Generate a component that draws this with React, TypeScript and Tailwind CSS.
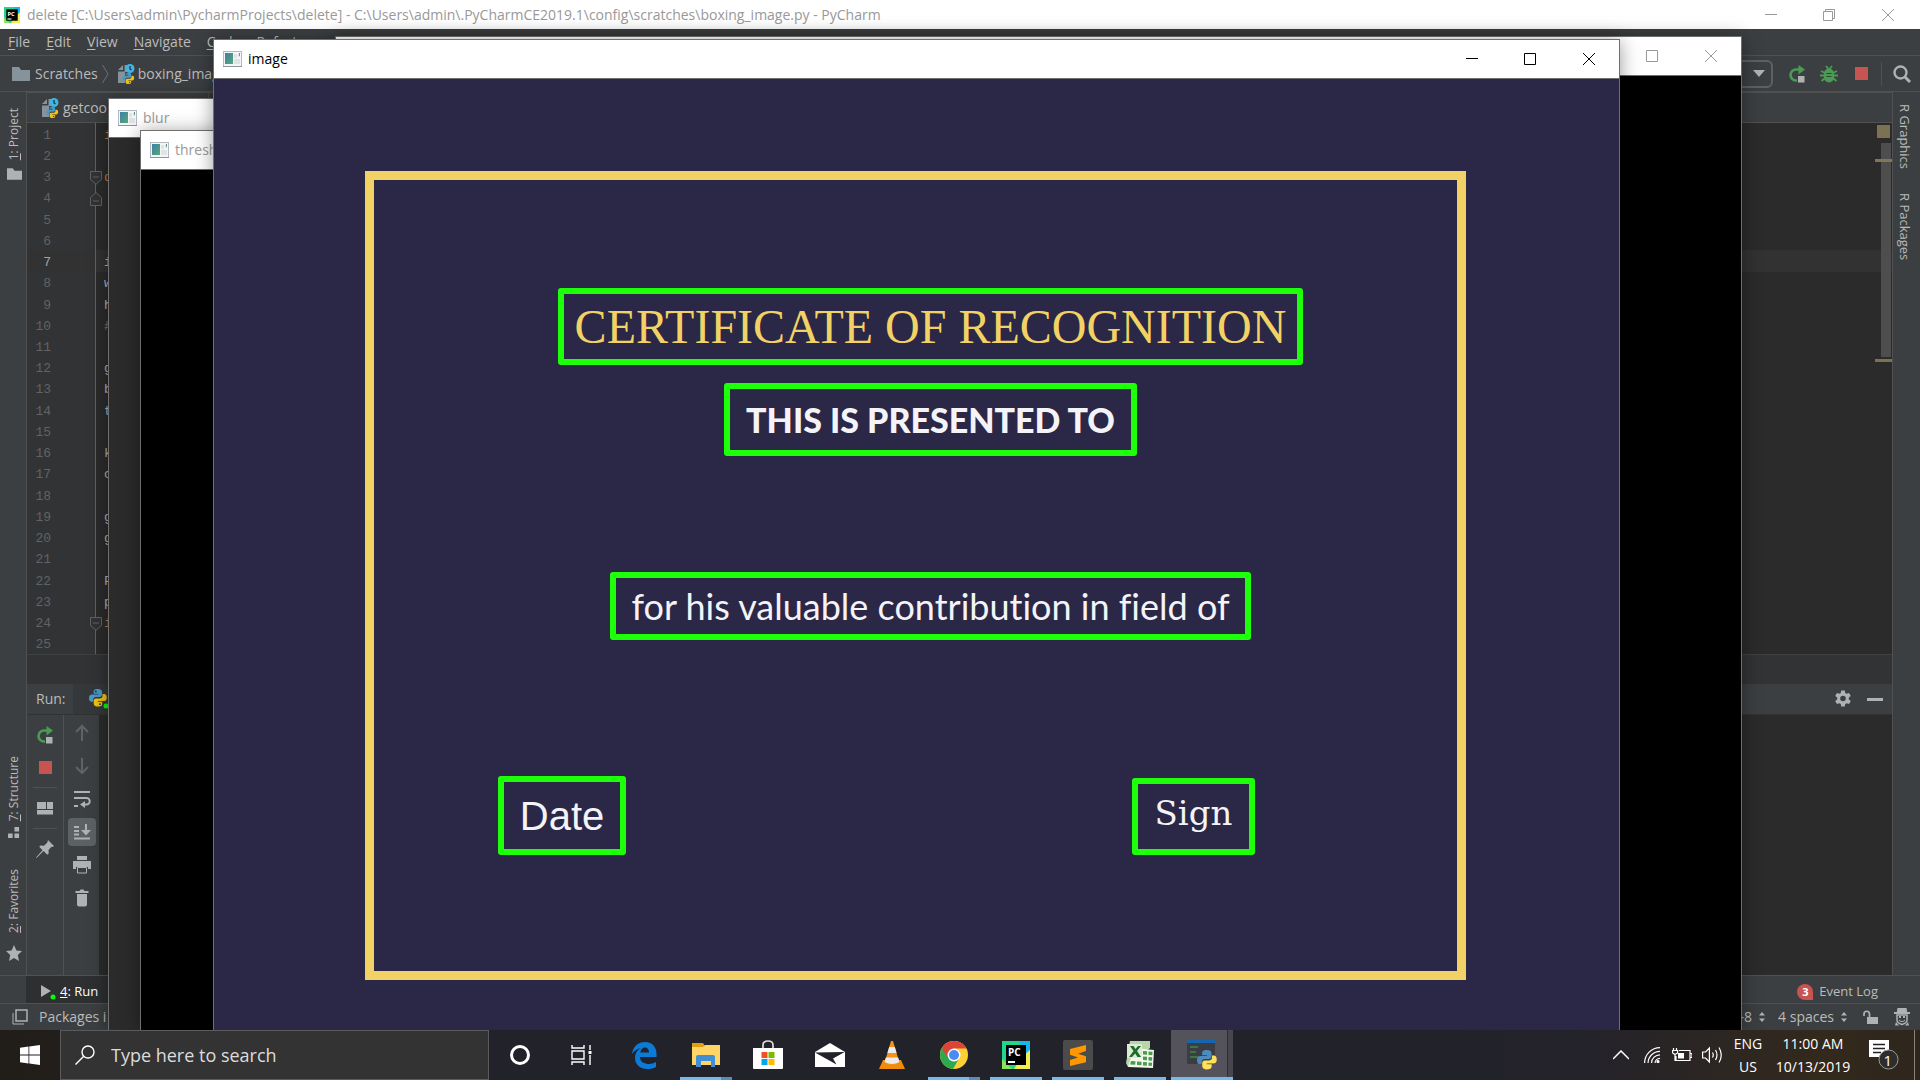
import React from "react";

type Kids = { children?: React.ReactNode };

/* ---------- icons ---------- */

const PyCharmLogo = ({ className }: { className: string }) => (
  <svg viewBox="0 0 28 28" className={className} aria-hidden="true">
    <rect width="28" height="28" fill="#21d789" />
    <path d="M17 0h11v10l-5 6z" fill="#17b6e8" />
    <path d="M28 9v19H12l8-12z" fill="#f4ee52" />
    <path d="M0 18l10 10H0z" fill="#8ee15a" />
    <rect x="4" y="4" width="20" height="20" fill="#000" />
    <rect x="6" y="20" width="7" height="2" fill="#fff" />
    <text x="6" y="15" fontSize="10" fontWeight="700" fontFamily="Open Sans, sans-serif" fill="#fff">PC</text>
  </svg>
);

const PythonMark = () => (
  <>
    <path d="M8 0C4.500 0 4.200 1.500 4.200 2.600V4.300h4v.7H2.600C1 5 0 6.200 0 8.300S1 11.500 2.300 11.500h1.600V9.600C3.900 8.200 5 7.300 6.300 7.300h3.600c1.100 0 2-.9 2-2V2.600C11.900 1 10.500 0 8 0z" fill="#4a97c9" />
    <path d="M8.200 16c3.500 0 3.800-1.500 3.800-2.600v-1.700H8V11h5.600c1.600 0 2.600-1.200 2.600-3.300s-1-3.200-2.300-3.200h-1.600v1.900c0 1.400-1.100 2.300-2.400 2.300H6.300c-1.100 0-2 .9-2 2v2.700C4.300 15 5.700 16 8.200 16z" fill="#f2c20f" />
    <circle cx="6.200" cy="2.200" r=".8" fill="#2b2b2b" />
    <circle cx="10" cy="13.800" r=".8" fill="#2b2b2b" />
  </>
);

const ScratchIcon = () => (
  <svg viewBox="0 0 18 20" className="h-5 w-[18px] shrink-0" aria-hidden="true">
    <path d="M6 1v5H1z" fill="#87939a" />
    <path d="M7.500 1H12v7H8v11H1V7.500h6.500z" fill="#87939a" />
    <circle cx="13" cy="4.500" r="4.500" fill="#3fb4e5" />
    <path d="M13 2v3l1.500 1" stroke="#22343c" strokeWidth="1.300" fill="none" />
    <g transform="translate(5.500 8.500) scale(.72)"><PythonMark /></g>
  </svg>
);

const FolderIcon = ({ className }: { className: string }) => (
  <svg viewBox="0 0 18 14" className={className} aria-hidden="true">
    <path d="M0 0h7l2 3h9v11H0z" fill="currentColor" />
  </svg>
);

const CvIcon = () => (
  <svg viewBox="0 0 19 16" className="h-4 w-[19px] shrink-0" aria-hidden="true">
    <defs>
      <linearGradient id="cv" x1="0" y1="0" x2="1" y2="1">
        <stop offset="0" stopColor="#3f7fa8" />
        <stop offset="1" stopColor="#56a878" />
      </linearGradient>
    </defs>
    <rect x=".5" y=".5" width="18" height="15" fill="#f4f5f6" stroke="#b4bac2" />
    <rect x="2" y="2" width="8" height="11" fill="url(#cv)" />
    <path d="M11 3h3v4h-3zM15 2h2v4h-2zM11 8h6v5h-6z" fill="#dfe3e6" />
    <path d="M16 2h1v3h-1z" fill="#5fa287" />
    <path d="M0 15h19v1H0z" fill="#8e949c" />
  </svg>
);

const RerunIcon = () => (
  <svg viewBox="0 0 18 18" className="size-[18px]" aria-hidden="true">
    <path d="M9 15.500H8A5.500 5.500 0 0 1 8 4.500h4" fill="none" stroke="#499c54" strokeWidth="2.600" />
    <path d="M10.500 0L17 4.500l-6.500 5z" fill="#499c54" />
    <rect x="10" y="11" width="6.500" height="6.500" fill="#afb1b3" />
  </svg>
);

const StopIcon = () => <span className="block size-[13px] bg-[#c75450]" />;

const BugIcon = () => (
  <svg viewBox="0 0 18 18" className="size-[18px]" aria-hidden="true">
    <path d="M6 1l2.500 3M12 1L9.500 4M1 6l4 2M17 6l-4 2M0 10.500h18M1.500 16L5 13M16.500 16L13 13" stroke="#499c54" strokeWidth="1.800" fill="none" />
    <rect x="4" y="3.500" width="10" height="14" rx="5" fill="#499c54" />
    <path d="M6.500 8.500h5M6.500 11.500h5" stroke="#3c3f41" strokeWidth="1.200" />
  </svg>
);

const MagnifierIcon = () => (
  <svg viewBox="0 0 18 18" className="size-[18px]" aria-hidden="true">
    <circle cx="7.500" cy="7.500" r="6" fill="none" stroke="#afb1b3" strokeWidth="2.400" />
    <path d="M12 12l5 5" stroke="#afb1b3" strokeWidth="3" />
  </svg>
);

const TriangleDown = () => (
  <svg viewBox="0 0 12 7" className="h-[7px] w-3" aria-hidden="true"><path d="M0 0h12L6 7z" fill="#afb1b3" /></svg>
);

const UpDown = () => (
  <svg viewBox="0 0 8 12" className="h-3 w-2 shrink-0" aria-hidden="true"><path d="M1 4.500L4 1l3 3.500zM1 7.500L4 11l3-3.500z" fill="#afb1b3" /></svg>
);

const GrayIcon = ({ children }: Kids) => (
  <svg viewBox="0 0 18 18" className="size-[18px]" fill="#afb1b3" aria-hidden="true">{children}</svg>
);

const FoldMarker = ({ up }: { up?: boolean }) => (
  <svg viewBox="0 0 12 14" className="h-3.5 w-3" aria-hidden="true">
    <path d={up ? "M.5 13.500V5.500L6 .7l5.500 4.800v8z" : "M.5 .5v8L6 13.300l5.500-4.800v-8z"} fill="#313335" stroke="#606366" />
    <path d={up ? "M3 9h6" : "M3 6h6"} stroke="#606366" />
  </svg>
);

const MinIcon = () => (
  <svg viewBox="0 0 12 12" className="size-3" stroke="currentColor" aria-hidden="true"><path d="M0 5.500h12" /></svg>
);
const MaxIcon = () => (
  <svg viewBox="0 0 12 12" className="size-3" stroke="currentColor" fill="none" aria-hidden="true"><path d="M.5 .5h11v11H.5z" /></svg>
);
const RestoreIcon = () => (
  <svg viewBox="0 0 12 12" className="size-3" stroke="currentColor" fill="none" aria-hidden="true"><path d="M.5 2.500h9v9h-9zM2.500 2.500v-2h9v9h-2" /></svg>
);
const CloseIcon = () => (
  <svg viewBox="0 0 12 12" className="size-3" stroke="currentColor" aria-hidden="true"><path d="M0 0l12 12M12 0L0 12" /></svg>
);

/* ---------- windows ---------- */

function WindowButtons({ restore }: { restore?: boolean }) {
  return (
    <div className="flex h-full">
      <button aria-label="Minimize" className="grid w-[58px] place-items-center"><MinIcon /></button>
      <button aria-label="Maximize" className="grid w-[58px] place-items-center">{restore ? <RestoreIcon /> : <MaxIcon />}</button>
      <button aria-label="Close" className="grid w-[60px] place-items-center"><CloseIcon /></button>
    </div>
  );
}

function CvWindow({ title, place, tone, body, children }: Kids & { title?: string; place: string; tone: string; body: string }) {
  return (
    <section className={`absolute bottom-0 flex w-[1407px] flex-col border border-b-0 border-[#6f6f6f] shadow-[0_2px_18px_rgba(0,0,0,0.4)] ${place}`}>
      <header className={`flex h-[38px] shrink-0 items-center justify-between bg-white pl-[9px] ${tone}`}>
        <div className="flex items-center gap-1.5">
          <CvIcon />
          {title && <h2 className="text-sm">{title}</h2>}
        </div>
        <WindowButtons />
      </header>
      <div className={`min-h-0 flex-1 overflow-hidden border-t border-[#6f6f6f] ${body}`}>{children}</div>
    </section>
  );
}

function Box({ className, children }: Kids & { className: string }) {
  return <div className={`flex items-center justify-center rounded-[3px] border-[6px] border-[#1eff0a] whitespace-nowrap ${className}`}>{children}</div>;
}

function Certificate() {
  return (
    <div className="pt-[92px] pr-[153px] pl-[151px]">
      <div className="h-[809px] border-[9px] border-[#f2d264] pt-[108px] text-[#f3f3f8]">
        <div className="flex flex-col items-center pl-[30px]">
          <Box className="h-[77px] w-[745px]">
            <h1 className="font-['Liberation_Serif',serif] text-[48px] leading-none text-[#f2d264]">CERTIFICATE OF RECOGNITION</h1>
          </Box>
          <Box className="mt-[18px] h-[73px] w-[413px]">
            <p className="font-['Lato',sans-serif] text-[34px] leading-none font-black">THIS IS PRESENTED TO</p>
          </Box>
          <Box className="mt-[116px] h-[68px] w-[641px]">
            <p className="font-['Lato',sans-serif] text-[36px] leading-none [font-variant-ligatures:none]">for his valuable contribution in field of</p>
          </Box>
        </div>
        <div className="mt-[136px] mr-[202px] ml-[124px] flex items-end justify-between">
          <Box className="h-[79px] w-[128px]">
            <p className="font-['Liberation_Sans',sans-serif] text-[40px] leading-none">Date</p>
          </Box>
          <Box className="h-[77px] w-[123px] pb-2">
            <p className="font-['DejaVu_Serif',serif] text-[34px] leading-none">Sign</p>
          </Box>
        </div>
      </div>
    </div>
  );
}

/* ---------- IDE ---------- */

const menus: [string, string][] = [["F", "ile"], ["E", "dit"], ["V", "iew"], ["N", "avigate"], ["C", "ode"], ["R", "efactor"]];

const code: [string, string][] = [
  ["i", "text-[#cc7832]"], ["", ""], ["d", "text-[#cc7832]"], ["", ""], ["", ""], ["", ""],
  ["i", "text-[#a9b7c6]"], ["w", "text-[#a9b7c6]"], ["h", "text-[#a9b7c6]"], ["#", "text-[#808080]"], ["", ""],
  ["g", "text-[#a9b7c6]"], ["b", "text-[#a9b7c6]"], ["t", "text-[#a9b7c6]"], ["", ""], ["k", "text-[#a9b7c6]"],
  ["c", "text-[#a9b7c6]"], ["", ""], ["g", "text-[#a9b7c6]"], ["g", "text-[#a9b7c6]"], ["", ""],
  ["F", "text-[#a9b7c6]"], ["p", "text-[#a9b7c6]"], ["i", "text-[#cc7832]"], ["", ""],
];

function Editor() {
  return (
    <div className="relative flex min-h-0 flex-1 bg-[#2b2b2b]">
      <ol className="grid flex-1 auto-rows-fr bg-[linear-gradient(to_right,#313335_68px,#606366_68px,#606366_69px,#2b2b2b_69px)] font-['Liberation_Mono',monospace] text-[13px] leading-4">
        {code.map(([ch, tone], i) => (
          <li key={i} className={`flex items-center pt-1 ${i === 6 ? "bg-[linear-gradient(to_right,#323232_68px,#606366_68px,#606366_69px,#323232_69px)]" : ""}`}>
            <span className={`w-6 text-right ${i === 6 ? "text-[#a4a3a3]" : "text-[#606366]"}`}>{i + 1}</span>
            <span className="flex w-[53px] justify-end pr-[2px] pl-3">
              {(i === 2 || i === 3 || i === 23) && <FoldMarker up={i === 3} />}
            </span>
            <span className={tone}>{ch}</span>
          </li>
        ))}
      </ol>
      <span className="absolute top-0.5 right-0.5 size-[13px] bg-[#7c7153]" />
      <span className="absolute top-5 right-px h-[214px] w-2.5 bg-[#4e4e4e]" />
      <span className="absolute top-9 right-0 h-[3px] w-[17px] bg-[#80775b]" />
      <span className="absolute top-[236px] right-0 h-[3px] w-[17px] bg-[#7c7153]" />
    </div>
  );
}

function ToolButton({ label, on, children }: Kids & { label: string; on?: boolean }) {
  return (
    <button aria-label={label} className={`grid size-7 place-items-center rounded ${on ? "bg-[#5c6164]" : ""}`}>{children}</button>
  );
}

function RunPanel() {
  return (
    <>
      <div className="flex h-[31px] shrink-0 items-stretch justify-between border-b border-[#323232] bg-[#3c3f41]">
        <div className="flex">
          <h3 className="flex w-[46px] items-center pl-[9px] text-sm">Run:</h3>
          <div className="flex w-40 items-center bg-[#35383a] pl-4">
            <svg viewBox="0 0 20 20" className="size-5" aria-hidden="true">
              <g transform="scale(1.1)"><PythonMark /></g>
              <circle cx="17" cy="17" r="2.500" fill="#0f0" />
            </svg>
          </div>
        </div>
        <div className="flex items-center gap-1 pr-[3px]">
          <ToolButton label="Settings">
            <GrayIcon>
              <path fillRule="evenodd" d="M7.200 .5h3.600l.4 2.500 1.400.8 2.400-.9 1.800 3.100-2 1.600v1.800l2 1.600-1.800 3.100-2.400-.9-1.400.8-.4 2.500H7.200l-.4-2.500-1.400-.8-2.400.9L1.200 11l2-1.600V7.600L1.200 6 3 2.900l2.400.9L6.800 3zM9 5.700a2.800 2.800 0 1 0 0 5.600 2.800 2.800 0 0 0 0-5.600z" />
            </GrayIcon>
          </ToolButton>
          <ToolButton label="Hide"><span className="block h-[3px] w-4 bg-[#afb1b3]" /></ToolButton>
        </div>
      </div>
      <div className="flex h-[260px] shrink-0 bg-[#2b2b2b]">
        <div className="flex w-[37px] flex-col items-center gap-1 border-r border-[#515151] bg-[#3c3f41] pt-1.5">
          <ToolButton label="Rerun"><RerunIcon /></ToolButton>
          <ToolButton label="Stop"><StopIcon /></ToolButton>
          <span className="my-0.5 h-px w-6 bg-[#515151]" />
          <ToolButton label="Layout"><GrayIcon><path d="M1 3h9v7H1zM11 3h6v7h-6zM1 11h16v4.500H1z" /></GrayIcon></ToolButton>
          <span className="my-0.5 h-px w-6 bg-[#515151]" />
          <ToolButton label="Pin"><GrayIcon><path d="M12 0l6 6-1.500 1-1-.3-3 3.300.2 3.500-1.500 1.200-3.600-3.600L.5 18 0 17.500l6.500-7.300L3.200 6.800 4.500 5.500 8 5.800l3.200-3z" /></GrayIcon></ToolButton>
        </div>
        <div className="flex w-[35px] flex-col items-center gap-[5px] bg-[#3c3f41] pt-1">
          <ToolButton label="Up"><GrayIcon><path d="M9 17V2M3 8l6-6 6 6" fill="none" stroke="#606366" strokeWidth="2" /></GrayIcon></ToolButton>
          <ToolButton label="Down"><GrayIcon><path d="M9 1v15M3 10l6 6 6-6" fill="none" stroke="#606366" strokeWidth="2" /></GrayIcon></ToolButton>
          <ToolButton label="Soft-wrap"><GrayIcon><path d="M1 1h16v2H1zM1 15h4v2H1zM7 14.500l5-3.500v7z" /><path d="M1 8h12.500a3.200 3.200 0 0 1 0 6.500H11" fill="none" stroke="#afb1b3" strokeWidth="2" /></GrayIcon></ToolButton>
          <ToolButton label="Scroll to end" on><GrayIcon><path d="M1 3h5v2H1zM1 7h5v2H1zM1 10.500h5v2H1zM1 14.500h16v2H1zM12 1h2v6h4l-5 5.500L8 7h4z" /></GrayIcon></ToolButton>
          <ToolButton label="Print"><GrayIcon><path d="M4 0h10v4H4zM0 5h18v8h-3v-2H3v2H0z" /><path d="M4.500 11.500h9v5.500h-9z" fill="none" stroke="#afb1b3" /></GrayIcon></ToolButton>
          <ToolButton label="Clear"><GrayIcon><path d="M2.500 2h4l1-1.500h3l1 1.500h4v2h-13zM4 5h10v10.500q0 2-2 2H6q-2 0-2-2z" /></GrayIcon></ToolButton>
        </div>
      </div>
    </>
  );
}

function Stripe({ children, hot }: Kids & { hot?: string }) {
  return (
    <span className="rotate-180 text-xs [writing-mode:vertical-rl]">
      {hot && <span className="underline">{hot}</span>}{children}
    </span>
  );
}

function Ide() {
  return (
    <div className="flex h-full flex-col bg-[#3c3f41] text-[#bbbbbb]">
      <header className="flex h-[29px] shrink-0 items-center justify-between bg-white pr-0.5 pl-1 text-[#999999]">
        <div className="flex items-center gap-[7px]">
          <PyCharmLogo className="size-4" />
          <h1 className="text-sm whitespace-nowrap">delete [C:\Users\admin\PycharmProjects\delete] - C:\Users\admin\.PyCharmCE2019.1\config\scratches\boxing_image.py - PyCharm</h1>
        </div>
        <WindowButtons restore />
      </header>
      <nav aria-label="Menu" className="flex h-[27px] shrink-0 items-center gap-4 border-b border-[#515151] pl-2 text-sm">
        {menus.map(([a, b]) => (
          <button key={a}><span className="underline underline-offset-2">{a}</span>{b}</button>
        ))}
      </nav>
      <div className="flex h-9 shrink-0 items-center justify-between border-b border-[#515151] pr-1 pl-3">
        <div className="flex items-center text-sm">
          <FolderIcon className="h-3.5 w-[18px] text-[#87939a]" />
          <span className="ml-[5px]">Scratches</span>
          <svg viewBox="0 0 7 18" className="mx-1 h-[18px] w-[7px]" fill="none" stroke="#6e7173" aria-hidden="true"><path d="M.5 0L6 9 .5 18" /></svg>
          <span className="ml-1"><ScratchIcon /></span>
          <span className="ml-[3px]">boxing_image.py</span>
        </div>
        <div className="flex items-center gap-1">
          <div className="relative mr-1.5 flex items-center">
            <select aria-label="Run configuration" className="h-7 w-44 appearance-none rounded-md border-2 border-[#5e6162] bg-[#3c3f41] pl-6 text-sm">
              <option>boxing_image</option>
            </select>
            <span className="pointer-events-none absolute right-2"><TriangleDown /></span>
          </div>
          <ToolButton label="Rerun"><RerunIcon /></ToolButton>
          <ToolButton label="Debug"><BugIcon /></ToolButton>
          <ToolButton label="Stop"><StopIcon /></ToolButton>
          <span className="mx-0.5 h-6 w-px bg-[#515151]" />
          <ToolButton label="Search"><MagnifierIcon /></ToolButton>
        </div>
      </div>
      <div className="flex min-h-0 flex-1">
        <aside className="flex w-[27px] shrink-0 flex-col items-center justify-between border-r border-[#515151] pt-4 pb-3.5 pl-0.5">
          <div className="flex flex-col items-center gap-2">
            <Stripe hot="1">: Project</Stripe>
            <FolderIcon className="h-3 w-[15px] text-[#afb1b3]" />
          </div>
          <div className="flex flex-col items-center gap-1.5">
            <Stripe hot="7">: Structure</Stripe>
            <svg viewBox="0 0 13 13" className="size-3" fill="#afb1b3" aria-hidden="true"><path d="M7 0h5v5H7zM0 7h5v5H0zM7 7h5v5H7z" /></svg>
            <span className="mt-6"><Stripe hot="2">: Favorites</Stripe></span>
            <svg viewBox="0 0 16 16" className="size-4" fill="#afb1b3" aria-hidden="true"><path d="M8 0l2.400 5.400 5.600.6-4.200 3.900L13 16l-5-3-5 3 1.200-6.100L0 6l5.600-.6z" /></svg>
          </div>
        </aside>
        <main className="flex min-w-0 flex-1 flex-col">
          <div className="flex h-[31px] shrink-0 border-y border-[#515151]">
            <div className="flex w-[182px] items-center gap-1 border-r border-[#515151] pl-3.5 text-sm"><ScratchIcon />getcoo</div>
          </div>
          <Editor />
          <div className="h-[30px] shrink-0 border-t border-[#3f4143] bg-[#313335]" />
          <RunPanel />
        </main>
        <aside className="flex w-7 shrink-0 flex-col items-center gap-6 border-l border-[#515151] pt-3 pr-1 text-[13px] leading-4">
          <span className="[writing-mode:vertical-rl]">R Graphics</span>
          <span className="[writing-mode:vertical-rl]">R Packages</span>
        </aside>
      </div>
      <div className="flex h-7 shrink-0 justify-between border-t border-[#515151] pl-[26px] text-[13px]">
        <button className="flex w-[100px] items-center gap-1 bg-[#2d2f30] pt-1 pl-3.5 text-white">
          <svg viewBox="0 0 16 16" className="size-4" aria-hidden="true"><path d="M1 1l10 6-10 6z" fill="#afb1b3" /><circle cx="13" cy="13" r="2.500" fill="#0f0" /></svg>
          <span><span className="underline">4</span>: Run</span>
        </button>
        <button className="flex items-center gap-1.5 pt-1 pr-[42px]">
          <span className="grid size-4 place-items-center rounded-full rounded-br-none bg-[#c75450] text-[11px] leading-none font-bold text-white">3</span>
          <span>Event Log</span>
        </button>
      </div>
      <footer className="flex h-[27px] shrink-0 items-center justify-between border-t border-[#515151] pr-2.5 pl-3 text-sm">
        <div className="flex items-center gap-[11px]">
          <svg viewBox="0 0 16 16" className="size-4" fill="none" stroke="#afb1b3" aria-hidden="true"><path d="M4 1h11v11H4z" strokeWidth="1.500" /><path d="M1 4v11h11" /></svg>
          <span>Packages i</span>
        </div>
        <div className="flex items-center">
          <span className="mr-1.5">UTF-8</span><UpDown />
          <span className="mr-1.5 ml-3">4 spaces</span><UpDown />
          <svg viewBox="0 0 15 15" className="ml-[15px] h-[15px] w-[15px]" aria-hidden="true"><path d="M4 7h11v7H4z" fill="#afb1b3" /><path d="M1 6V4a2.700 2.700 0 0 1 5.500 0v3" fill="none" stroke="#afb1b3" strokeWidth="1.700" /></svg>
          <svg viewBox="0 0 16 18" className="ml-4 h-[18px] w-4" fill="#afb1b3" aria-hidden="true">
            <path d="M3.500 0h9l.7 4H16v2H0V4h2.800z" />
            <path d="M3 7v5q0 3 5 4.500 5-1.500 5-4.500V7z" fill="none" stroke="#afb1b3" strokeWidth="1.500" />
            <path d="M5 8h2v2H5zM9 8h2v2H9zM5 11.500q3 3 6 0v1.300q-3 2.500-6 0zM2 14l3 3.500H1zM14 14l-3 3.500h4z" />
          </svg>
        </div>
      </footer>
    </div>
  );
}

/* ---------- taskbar ---------- */

function TaskButton({ label, open, multi, active, children }: Kids & { label: string; open?: boolean; multi?: boolean; active?: boolean }) {
  return (
    <button aria-label={label} className={`relative grid w-[62px] place-items-center ${active ? "bg-[linear-gradient(to_right,#54525b_56px,#2f2e36_56px,#2f2e36_57px,#47464e_57px)]" : ""}`}>
      {children}
      {open && (
        <span className={`absolute bottom-0 flex h-[3px] bg-[#76b9ed] ${active ? "inset-x-0" : "inset-x-[5px]"}`}>
          {multi && <span className="ml-auto w-[11px] bg-[#5a8db6]" />}
        </span>
      )}
    </button>
  );
}

function Taskbar() {
  return (
    <footer className="flex h-[50px] shrink-0 justify-between bg-[linear-gradient(to_right,#211e19_0,#22222b_25%,#22222b_75%,#24232a_83%,#33291c_95%,#2e261c)] text-white">
      <div className="flex">
        <button aria-label="Start" className="grid w-[60px] place-items-center">
          <svg viewBox="0 0 20 20" className="size-5" fill="#fff" aria-hidden="true"><path d="M0 2.800L8.500 1.600v8H0zM9.300 1.500L20 0v9.600H9.300zM0 10.400h8.500v8L0 17.200zM9.300 10.400H20V20L9.300 18.500z" /></svg>
        </button>
        <label className="flex w-[429px] items-center gap-4 border border-[#5b5b5b] bg-[#333333] pl-3.5">
          <svg viewBox="0 0 20 20" className="size-5 shrink-0" fill="none" stroke="#fff" strokeWidth="1.400" aria-hidden="true"><circle cx="13" cy="7" r="6" /><path d="M8.500 11.500L.5 19.500" /></svg>
          <input aria-label="Search" placeholder="Type here to search" className="w-full bg-transparent text-lg outline-none placeholder:text-[#dcdcdc]" />
        </label>
        <TaskButton label="Cortana"><span className="block size-5 rounded-full border-[3px] border-white" /></TaskButton>
        <TaskButton label="Task View">
          <svg viewBox="0 0 22 20" className="h-5 w-[22px]" fill="none" stroke="#fff" strokeWidth="1.400" aria-hidden="true"><path d="M1 0v3h12V0M1 6h12v8H1zM1 20v-3h12v3M19 0v5M19 10v10" /><path d="M17.500 6h3v3h-3z" fill="#fff" stroke="none" /></svg>
        </TaskButton>
        <TaskButton label="Edge">
          <svg viewBox="0 0 25 27" className="h-[27px] w-[25px]" aria-hidden="true"><path fill="#0b7bd8" d="M0 12C1 4 6.500 0 13 0c7.500 0 11.500 5.500 11.500 11.500V15H8c0 5 4.500 7 9 7 2.500 0 5-.7 7-2v5c-2.500 1.400-5.500 2-8.500 2C8 27 3 22.500 3 16c0-4.500 2-8 6-10-4 .8-7.300 3.300-9 6zM8.300 10.500H17C17 7.500 15.500 5.500 13 5.500c-2.600 0-4.300 2-4.700 5z" /></svg>
        </TaskButton>
        <TaskButton label="File Explorer" open multi>
          <svg viewBox="0 0 28 28" className="size-7" aria-hidden="true"><path d="M0 2h11l2 3v5H0z" fill="#e09f10" /><path d="M0 6h11l2-2h15v20H0z" fill="#ffd567" /><path d="M4 26V16q0-2 2-2h15q2 0 2 2v10h-4v-6H9v6z" fill="#3f8fd4" /></svg>
        </TaskButton>
        <TaskButton label="Store">
          <svg viewBox="0 0 30 30" className="size-[30px]" aria-hidden="true"><path d="M10 9V5q0-4 5-4t5 4v4" fill="none" stroke="#ddd" strokeWidth="1.700" /><path d="M0 8h30v20q0 1-1 1H1q-1 0-1-1z" fill="#fff" /><path d="M8.500 12h6v6h-6z" fill="#f25022" /><path d="M15.500 12h6v6h-6z" fill="#7fba00" /><path d="M8.500 19h6v6h-6z" fill="#00a4ef" /><path d="M15.500 19h6v6h-6z" fill="#ffb900" /></svg>
        </TaskButton>
        <TaskButton label="Mail">
          <svg viewBox="0 0 30 24" className="h-6 w-[30px]" aria-hidden="true"><path d="M0 9L15 0l15 9v15H0z" fill="#fff" /><path d="M0 9.500l30-.5-12 6.500 3.500 6z" fill="#22222b" /><path d="M30 9v10l-11-3.500z" fill="#fff" /></svg>
        </TaskButton>
        <TaskButton label="VLC">
          <svg viewBox="0 0 26 28" className="h-7 w-[26px]" aria-hidden="true"><path d="M4 19h18l4 9H0z" fill="#f28a0c" /><path d="M12 0h2l6.500 22q-7.500 4-15 0z" fill="#f7931a" /><path d="M10.200 6h5.600l1.800 6H8.400zM6.800 16.500h12.400l1.300 4.500q-7.500 4-15 0z" fill="#ececec" /></svg>
        </TaskButton>
        <TaskButton label="Chrome" open multi>
          <svg viewBox="0 0 28 28" className="size-7" aria-hidden="true"><circle cx="14" cy="14" r="14" fill="#fdd033" /><path d="M14 14L1.900 7A14 14 0 0 0 13 28l6-10.500z" fill="#2da94f" /><path d="M14 7.500h12.400A14 14 0 0 0 1.900 7L8 17.500z" fill="#dc4437" /><circle cx="14" cy="14" r="6.500" fill="#fff" /><circle cx="14" cy="14" r="5" fill="#4a8af4" /></svg>
        </TaskButton>
        <TaskButton label="PyCharm" open><PyCharmLogo className="size-7" /></TaskButton>
        <TaskButton label="Sublime Text" open>
          <svg viewBox="0 0 30 30" className="size-[30px]" aria-hidden="true"><rect width="30" height="30" rx="2" fill="#4b4b4b" /><path d="M23 5v6l-8 2.700 8 2.500v6L7 26v-6l8-2.500L7 14.800V9z" fill="#ff9800" /></svg>
        </TaskButton>
        <TaskButton label="Excel" open>
          <svg viewBox="0 0 30 28" className="h-7 w-[30px]" aria-hidden="true"><path d="M5 0h20v7L3 26 1 22z" fill="#b9d6a8" /><path d="M9 7l20 2-1 18L3 26z" fill="#f2f8ee" /><path d="M18 10l4 .3v3.500l-4-.2zM23.500 10.500l4 .3-.2 3.500-3.800-.3zM18 15.500l4 .2v3.500l-4-.2zM23.500 16l3.700.2-.2 3.500-3.500-.2zM18 21l4 .2-.2 3.500-3.800-.2zM23.500 21.500l3.500.2-.2 3.300-3.300-.2zM12 20.500l4.500.3v3.500L12 24zM6 20l4.500.3-.3 3.500-5-.3z" fill="#4a9b4e" /><path d="M2 3h15v14H2z" fill="#dcebd3" /><path d="M5 5h3.500l2 3 2.500-3h3l-4 5 4 6h-3.500l-2.300-3.500L7 16H4l4.500-6z" fill="#1f6b2b" /></svg>
        </TaskButton>
        <TaskButton label="Python" open active>
          <svg viewBox="0 0 30 30" className="size-[30px]" aria-hidden="true"><path d="M0 0h28v24H0z" fill="#3b3d43" /><path d="M0 0h28v3H0z" fill="#1565b0" /><path d="M3 7h8M3 12h6M3 17h8" stroke="#3c8a46" strokeWidth="1.600" /><g transform="translate(10 10) scale(1.22)"><path d="M8 0C4.500 0 4.200 1.500 4.200 2.600V4.300h4v.7H2.600C1 5 0 6.200 0 8.300S1 11.500 2.300 11.500h1.600V9.600C3.900 8.200 5 7.300 6.300 7.300h3.600c1.100 0 2-.9 2-2V2.600C11.900 1 10.500 0 8 0z" fill="#4b8bbe" /><path d="M8.200 16c3.500 0 3.800-1.500 3.800-2.600v-1.700H8V11h5.600c1.600 0 2.600-1.200 2.600-3.300s-1-3.200-2.300-3.200h-1.600v1.900c0 1.400-1.100 2.300-2.400 2.300H6.300c-1.100 0-2 .9-2 2v2.700C4.300 15 5.700 16 8.200 16z" fill="#ffe25a" /></g></svg>
        </TaskButton>
      </div>
      <div className="flex items-center text-sm leading-[23px]">
        <button aria-label="Show hidden icons"><svg viewBox="0 0 16 10" className="h-2.5 w-4" fill="none" stroke="#fff" strokeWidth="1.500" aria-hidden="true"><path d="M0 9l8-8 8 8" /></svg></button>
        <button aria-label="Network" className="ml-[15px]">
          <svg viewBox="0 0 16 16" className="size-4" fill="none" stroke="#fff" strokeWidth="1.200" aria-hidden="true"><path d="M.6 16A15.400 15.400 0 0 1 16 .6M4 16A12 12 0 0 1 16 4.300M7.500 16A8.500 8.500 0 0 1 16 7.800" /><path d="M11 16a5 5 0 0 1 5-4.700" /><circle cx="14" cy="14.500" r="1" fill="#fff" /></svg>
        </button>
        <button aria-label="Battery" className="ml-3">
          <svg viewBox="0 0 20 14" className="h-3.5 w-5" fill="none" stroke="#fff" strokeWidth="1.200" aria-hidden="true"><path d="M7 2.500h11v10H4V8M18.500 5.500H20v4h-1.500M1.500 0v2M4.500 0v2M.6 2.500h5V5L3 6.500.6 5zM3 6v7" /><path d="M6 5h6v5.500H6z" fill="#fff" stroke="none" /></svg>
        </button>
        <button aria-label="Volume" className="ml-2.5">
          <svg viewBox="0 0 21 18" className="h-[18px] w-[21px]" fill="none" stroke="#fff" strokeWidth="1.200" aria-hidden="true"><path d="M.6 6h3l3.800-4v14l-3.800-4h-3zM10.500 6.500q1.500 2.500 0 5M13.500 4q3 5 0 10M17 1.500q4.500 7.500 0 15" /></svg>
        </button>
        <button className="ml-2.5 w-[30px] text-center">ENG<br />US</button>
        <button className="ml-3 w-[76px] text-center">11:00 AM<br />10/13/2019</button>
        <button aria-label="1 new notification" className="relative ml-[18px] h-[30px] w-[30px]">
          <svg viewBox="0 0 30 30" className="size-[30px]" aria-hidden="true"><path d="M0 0h20v17h-6v4l-4-4H0z" fill="#fff" /><path d="M4 4.500h12M4 8.500h12M4 12.500h8" stroke="#222" strokeWidth="1.300" /><circle cx="19.500" cy="19.500" r="9.500" fill="#2f2d2b" stroke="#999" /></svg>
          <span className="absolute right-[7px] bottom-0 text-[15px] leading-5">1</span>
        </button>
        <span className="ml-[15px] h-full w-1.5 border-l border-[#8a8378]" />
      </div>
    </footer>
  );
}

export default function App() {
  return (
    <div className="flex h-screen flex-col overflow-hidden font-['Open_Sans',sans-serif]">
      <div className="relative min-h-0 flex-1 overflow-hidden">
        <Ide />
        <CvWindow place="top-9 left-[335px]" tone="text-[#999999]" body="bg-black" />
        <CvWindow title="blur" place="top-[98px] left-[108px]" tone="text-[#999999]" body="bg-[#2b2b2b]" />
        <CvWindow title="thresh" place="top-[130px] left-[140px]" tone="text-[#999999]" body="bg-black" />
        <CvWindow title="image" place="top-[39px] left-[213px]" tone="text-black" body="bg-[#2b2746]">
          <Certificate />
        </CvWindow>
      </div>
      <Taskbar />
    </div>
  );
}
